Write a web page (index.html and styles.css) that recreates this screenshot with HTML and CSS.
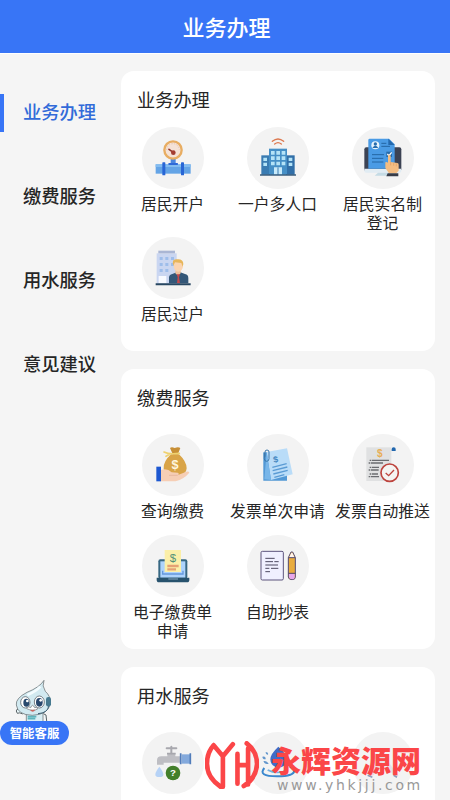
FILE: index.html
```html
<!DOCTYPE html>
<html lang="zh-CN">
  <head>
    <meta charset="UTF-8" />
    <meta name="viewport" content="width=device-width, initial-scale=1.0" />
    <title>业务办理</title>
    <link rel="stylesheet" href="styles.css">
  </head>
  <body class="body">
    <header class="header">
      <h1 class="header__title">业务办理</h1>
    </header>
    <div class="container">
      <ul class="menu">
        <li class="menu__item menu__item-active">业务办理</li>
        <li class="menu__item">缴费服务</li>
        <li class="menu__item">用水服务</li>
        <li class="menu__item">意见建议</li>
      </ul>
      <main class="content">
        <section class="card">
          <h2 class="card__title">业务办理</h2>
          <ul class="list list-business">
            <li class="service">
              <svg class="service__icon" viewBox="0 0 186 186">
                <rect x="86" y="94" width="15" height="22" fill="#4a86e0" />
                <rect x="41" y="112" width="105" height="28" fill="#64a4e6" />
                <rect x="41" y="112" width="105" height="8" fill="#83bcf0" />
                <rect x="79" y="108" width="29" height="6" rx="2" fill="#2f6ad8" />
                <rect x="61" y="106" width="9" height="39" rx="2" fill="#2865d5" />
                <rect x="117" y="106" width="9" height="39" rx="2" fill="#2865d5" />
                <circle cx="93" cy="69" r="26" fill="#f5e2d6" stroke="#e8ad62" stroke-width="7" />
                <path d="M74 69a19 19 0 0 1 38 0" fill="none" stroke="#e4c5b3" stroke-width="3" stroke-dasharray="4 4" />
                <path d="M81 67l14 10" stroke="#93352b" stroke-width="5" stroke-linecap="round" />
                <circle cx="94" cy="77" r="7" fill="#a43d31" />
              </svg>
              <span class="service__name">居民开户</span>
            </li>
            <li class="service">
              <svg class="service__icon" viewBox="0 0 186 186">
                <path d="M76 43q17-14 34 0M83 51q10-8 20 0" fill="none" stroke="#dd7950" stroke-width="4" stroke-linecap="round" />
                <rect x="43" y="85" width="26" height="58" fill="#397bb2" />
                <rect x="117" y="85" width="26" height="58" fill="#316fa8" />
                <rect x="66" y="65" width="54" height="78" fill="#458fc6" />
                <path d="M49 92h11v10H49zM49 107h11v10H49zM125 92h11v10h-11zM125 107h11v10h-11zM72 72h11v11H72zM88 72h11v11H88zM104 72h11v11h-11zM72 88h11v11H72zM88 88h11v11H88zM104 88h11v11h-11zM72 104h11v11H72zM88 104h11v11H88zM104 104h11v11h-11z" fill="#b4e3f7" />
                <path d="M81 121h24v22H81z" fill="#c8eafa" />
                <path d="M93 121v22" stroke="#397bb2" stroke-width="3" />
                <rect x="39" y="142" width="108" height="4" fill="#244d70" />
              </svg>
              <span class="service__name">一户多人口</span>
            </li>
            <li class="service">
              <svg class="service__icon" viewBox="0 0 186 186">
                <rect x="37" y="61" width="111" height="72" rx="6" fill="#3c4354" />
                <path d="M37 125h111v7q0 5-6 5H43q-6 0-6-5z" fill="#e1ecf3" />
                <path d="M78 137h34v9H68z" fill="#c5dbe5" />
                <path d="M53 35h58l17 17v73H49V39q0-4 4-4z" fill="#4a9be5" />
                <path d="M109 35l19 19h-19z" fill="#2469ae" />
                <circle cx="70" cy="55" r="12" fill="#e9f4fc" />
                <circle cx="70" cy="51" r="5" fill="#286dae" />
                <path d="M61 63q9-13 18 0z" fill="#286dae" />
                <path d="M88 49h15M88 58h26M60 83h36M60 94h34M60 105h34" stroke="#2466a3" stroke-width="3" />
                <rect x="103" y="74" width="17" height="16" fill="#286ba9" />
                <path d="M106 81l5 5 8-10" fill="none" stroke="#fff" stroke-width="4" />
                <path d="M108 88q0-5 4-5t4 5v17l20 3q4 1 4 5v18l-7 8h-22l-11-16v-17q3-3 8 1z" fill="#f4bd82" />
                <path d="M116 105v10M125 107v9M133 109v9" stroke="#d99d66" stroke-width="2" />
                <path d="M107 139h32v9h-36z" fill="#373c48" />
              </svg>
              <span class="service__name">居民实名制<br />登记</span>
            </li>
            <li class="service">
              <svg class="service__icon" viewBox="0 0 186 186">
                <rect x="44" y="49" width="60" height="91" fill="#cad6f1" />
                <rect x="49" y="41" width="50" height="8" fill="#aab6d4" />
                <path d="M53 60h9v9h-9zM70 60h9v9h-9zM87 60h9v9h-9zM53 78h9v9h-9zM70 78h9v9h-9zM87 78h9v9h-9zM53 96h9v9h-9zM70 96h9v9h-9z" fill="#9ebdea" />
                <path d="M50 117h23v22H50z" fill="#f8faff" />
                <path d="M81 139v-17q0-9 10-11l13-5h11l14 5q10 2 10 12v16z" fill="#345778" />
                <path d="M101 96h15v13l-8 7-8-7z" fill="#efc19c" />
                <ellipse cx="109" cy="86" rx="14" ry="18" fill="#fbd4b0" />
                <path d="M94 86q-6-20 10-19 20-2 20 14l-2 8-4-11-19-2z" fill="#e7b65b" />
                <path d="M104 112h10l-3 9 3 18h-9l2-18z" fill="#c4484b" />
                <path d="M41 139h105v6H41z" fill="#284762" />
              </svg>
              <span class="service__name">居民过户</span>
            </li>
          </ul>
        </section>
        <section class="card">
          <h2 class="card__title">缴费服务</h2>
          <ul class="list list-payment">
            <li class="service">
              <svg class="service__icon" viewBox="0 0 186 186">
                <path d="M84 42q5-4 14 0 11-4 17 0l-8 20H93z" fill="#c78f36" />
                <path d="M87 61q-24 22-22 43 1 21 35 21 34 0 34-22 0-20-23-42z" fill="#d9a447" />
                <path d="M66 54q15 8 46 4M86 59l-14 8" fill="none" stroke="#efd270" stroke-width="5" stroke-linecap="round" />
                <text x="99" y="104" class="money money-bag">$</text>
                <path d="M57 108q18-7 32 7l18 1q7 3-1 8l27-11q8-1 9 3-16 19-41 26H57z" fill="#f6ceb5" />
                <path d="M81 124l26 0" stroke="#e1ae95" stroke-width="2" />
                <rect x="43" y="98" width="14" height="44" fill="#1d58d1" />
              </svg>
              <span class="service__name">查询缴费</span>
            </li>
            <li class="service">
              <svg class="service__icon" viewBox="0 0 186 186">
                <path d="M49 55h17l54 65v20H49z" fill="#5298d5" />
                <path d="M59 54l61-11 17 78-65 17z" fill="#b9dcf8" />
                <path d="M59 54l13 84-20-2z" fill="#78b6e9" />
                <path d="M76 100l43-11M77 110l44-11M79 120l43-11M82 130l30-8" stroke="#5a9bd4" stroke-width="4" />
                <text x="86" y="85" class="money money-note" transform="rotate(-10 86 76)">$</text>
                <path d="M54 68V54q0-6 6-6t6 6v20q0 8-7 8t-7-8V57" fill="none" stroke="#3a75a8" stroke-width="3" />
              </svg>
              <span class="service__name">发票单次申请</span>
            </li>
            <li class="service">
              <svg class="service__icon" viewBox="0 0 186 186">
                <rect x="43" y="40" width="75" height="101" fill="#e0e1e2" />
                <text x="83" y="69" class="money money-invoice">$</text>
                <path d="M53 79h58M50 87h43M53 100h28M50 108h30M53 120h25M50 128h31" stroke="#6a6c70" stroke-width="4" stroke-dasharray="5 2 60" />
                <path d="M119 51v-6q0-5 6-5t6 5v6z" fill="#2167ae" />
                <circle cx="113" cy="116" r="26" fill="#f5f4f2" stroke="#bd443e" stroke-width="5" />
                <path d="M101 117l9 8 16-17" fill="none" stroke="#bd443e" stroke-width="4" />
              </svg>
              <span class="service__name">发票自动推送</span>
            </li>
            <li class="service">
              <svg class="service__icon" viewBox="0 0 186 186">
                <rect x="49" y="73" width="87" height="58" rx="6" fill="#366782" />
                <rect x="55" y="79" width="75" height="49" fill="#add3fc" />
                <path d="M62 107v10h61v-10" fill="none" stroke="#6498dc" stroke-width="4" />
                <rect x="68" y="45" width="49" height="66" fill="#fbefa8" />
                <text x="93" y="80" class="money money-bill">$</text>
                <path d="M76 93h34M76 103h26" stroke="#e5a174" stroke-width="7" />
                <path d="M44 128h98v6q0 8-7 8H51q-7 0-7-8z" fill="#28536e" />
                <path d="M79 132h29" stroke="#668ba6" stroke-width="4" />
              </svg>
              <span class="service__name">电子缴费单<br />申请</span>
            </li>
            <li class="service">
              <svg class="service__icon" viewBox="0 0 186 186">
                <rect x="42" y="49" width="67" height="86" rx="4" fill="#f0f0ff" stroke="#5d557d" stroke-width="3" />
                <path d="M55 70h28M55 80h23M82 80h13M55 90h38M55 100h12M72 100h22M55 110h14" stroke="#4d4961" stroke-width="3" />
                <path d="M124 68l8-17h5l8 17v58q0 8-10 8t-11-8z" fill="#e9ac3e" stroke="#514970" stroke-width="3" />
                <path d="M126 68l7-15h3l7 15z" fill="#fff4ed" />
                <path d="M126 116h17v10q0 7-8 7t-9-7z" fill="#e8a6ed" />
                <path d="M124 68h21M124 115h21" stroke="#514970" stroke-width="3" />
              </svg>
              <span class="service__name">自助抄表</span>
            </li>
          </ul>
        </section>
        <section class="card card-last">
          <h2 class="card__title">用水服务</h2>
          <ul class="list list-water">
            <li class="service">
              <svg class="service__icon" viewBox="0 0 186 186">
                <path d="M45 98V85q0-12 13-12h18V64h24v9h17v19H65v6z" fill="#bebec3" />
                <path d="M88 64V44M74 49h29" stroke="#a8a8ae" stroke-width="6" stroke-linecap="round" />
                <path d="M75 65h26" stroke="#a7a7ad" stroke-width="5" />
                <rect x="119" y="67" width="26" height="28" fill="#83a9dc" />
                <path d="M116 64v33M145 64v33" stroke="#517cba" stroke-width="5" />
                <path d="M52 104q-24 31 0 31t0-31z" fill="#b6d2f6" />
                <circle cx="93" cy="123" r="22" fill="#437f2b" />
                <text x="93" y="133" class="question">?</text>
              </svg>
            </li>
            <li class="service">
              <svg class="service__icon" viewBox="0 0 186 186">
                <path d="M94 44q-24 22-24 38a25 25 0 0 0 50 0q0-16-26-38z" fill="#416bc9" />
                <path d="M46 74q11-3 10 8-9 1-10-8zM56 60q9 0 7 8-7 0-7-8zM49 88q10-3 16 7-11 4-16-7z" fill="#6296cc" />
                <path d="M52 108q-21 25 38 25 51 0 52-17 0-9-14-11" fill="none" stroke="#3b88ce" stroke-width="6" />
                <path d="M62 114q28 15 61 0" fill="none" stroke="#74b1df" stroke-width="5" />
              </svg>
            </li>
            <li class="service">
              <svg class="service__icon" viewBox="0 0 186 186">
                <path d="M55 131l31-72 13 22-34 49z" fill="#ecd9df" />
                <path d="M93 67l47 65h-14L86 81z" fill="#e3e1e8" />
                <path d="M47 130l14 6M125 130l10 6" stroke="#8e9abb" stroke-width="5" />
              </svg>
            </li>
          </ul>
        </section>
      </main>
    </div>

    <div class="chat">
      <svg class="chat__mascot" viewBox="0 0 120 135">
        <path d="M23 105Q14 99 7 103q-6-8-1-12 6-2 9 5l15 5M85 104l8 4 2 18" fill="#e6f5f8" stroke="#5c6467" stroke-width="3" />
        <path d="M34 92h50v38H34z" fill="#d9eef4" stroke="#5c6467" stroke-width="2" />
        <path d="M87 4Q74 25 36 40 1 58 4 78q4 30 48 31 49-2 54-37Q107 51 91 37 80 21 87 4z" fill="#d2eaf1" stroke="#596164" stroke-width="2" />
        <path d="M76 23Q62 38 37 48" fill="none" stroke="#f4fcff" stroke-width="8" />
        <ellipse cx="31" cy="70" rx="14" ry="17" fill="#fff" stroke="#42474f" stroke-width="2" />
        <ellipse cx="73" cy="69" rx="15" ry="18" fill="#fff" stroke="#42474f" stroke-width="2" />
        <ellipse cx="34" cy="71" rx="9" ry="12" fill="#28486d" />
        <ellipse cx="73" cy="70" rx="10" ry="13" fill="#28486d" />
        <circle cx="37" cy="66" r="4" fill="#fff" />
        <circle cx="77" cy="64" r="4" fill="#fff" />
        <path d="M35 89q5-10 12-3 5-14 12 0 7-4 9 4-13 8-33-1z" fill="#fff" stroke="#686b70" stroke-width="2" />
        <path d="M45 93q9 11 16-1z" fill="#c96761" />
        <rect x="93" y="54" width="15" height="29" rx="7" fill="#46798f" />
        <path d="M101 82q-3 20-32 22" fill="none" stroke="#3c5f74" stroke-width="3" />
        <path d="M38 113h26M38 119h23" stroke="#5eb5bd" stroke-width="5" />
      </svg>
      <span class="chat__label">智能客服</span>
    </div>

    <div class="watermark">
      <svg class="watermark__logo" viewBox="0 0 163 143">
        <path d="M26 12Q6 34 6 68q0 42 41 69M26 12l28 33L84 9M54 43v94M98 38v90M98 72h32M126 6q31 24 31 63-2 42-40 66M130 22v108" fill="none" stroke="#fb4648" stroke-width="14" stroke-linecap="round" stroke-linejoin="round" />
      </svg>
      <div class="watermark__text">
        <span class="watermark__name">永辉资源网</span>
        <span class="watermark__site">www.yhkjjj.com</span>
      </div>
    </div>
  </body>
</html>
```

FILE: styles.css
```css
.body {
  position: relative;
  height: 800px;
  margin: 0;
  overflow: hidden;
  background-color: #f5f5f5;
  color: #262626;
  font-family: "Noto Sans CJK SC", sans-serif;
}
.header {
  display: flex;
  justify-content: center;
  height: 53px;
  background-color: #3875f6;
  border-bottom: 1px solid #fff;
}
.header__title {
  margin: 0;
  padding-left: 3px;
  color: #fff;
  font-size: 22px;
  font-weight: 500;
  line-height: 52px;
}
.container {
  display: flex;
  flex-direction: row;
}
.menu {
  width: 121px;
  margin: 0;
  padding: 17px 0 0;
  list-style: none;
}
.menu__item {
  height: 38px;
  margin: 23px 0 46px;
  padding-left: 23px;
  font-size: 18.3px;
  font-weight: 500;
  line-height: 35px;
}
.menu__item-active {
  padding-left: 19px;
  border-left: 4px solid #3875f6;
  color: #326bd9;
}
.content {
  display: flex;
  flex-direction: column;
  gap: 18px;
  width: 314px;
  padding-top: 17px;
}
.card {
  height: 280px;
  background-color: #fff;
  border-radius: 13px;
}
.card-last {
  height: 133px;
  border-radius: 13px 13px 0 0;
}
.card__title {
  margin: 0;
  padding: 15px 0 1px 16px;
  font-size: 18.2px;
  font-weight: 400;
  line-height: 27px;
}
.list {
  display: grid;
  grid-template-columns: repeat(3, 105px);
  margin: 0 0 0 -1px;
  padding: 0;
  list-style: none;
}
.list-business {
  grid-auto-rows: 110px;
  padding-top: 13px;
}
.list-payment {
  grid-auto-rows: 101px;
  padding-top: 22px;
}
.list-water {
  padding-top: 22px;
}
.service {
  display: flex;
  flex-direction: column;
  align-items: center;
  gap: 5px;
}
.service__icon {
  flex-shrink: 0;
  width: 62px;
  height: 62px;
  border-radius: 50%;
  background-color: #f3f3f3;
}
.service__name {
  font-size: 15.8px;
  line-height: 19px;
  text-align: center;
  white-space: nowrap;
}
.money {
  font-family: "Liberation Sans", sans-serif;
  font-size: 38px;
  font-weight: bold;
  text-anchor: middle;
  fill: #fff6df;
}
.money-note {
  font-size: 26px;
  fill: #4385bf;
}
.money-invoice {
  font-size: 30px;
  fill: #e8ae55;
}
.money-bill {
  font-size: 34px;
  font-weight: normal;
  fill: #518e78;
}
.question {
  font-family: "Liberation Sans", sans-serif;
  font-size: 29px;
  font-weight: bold;
  text-anchor: middle;
  fill: #fff;
}
.chat {
  position: absolute;
  left: 0;
  top: 679px;
  display: flex;
  flex-direction: column;
}
.chat__mascot {
  width: 40px;
  height: 45px;
  margin-left: 15px;
}
.chat__label {
  width: 69px;
  height: 24px;
  margin-top: -3px;
  z-index: 1;
  border-radius: 12px;
  background-color: #3875f6;
  color: #fff;
  font-size: 12.4px;
  font-weight: 700;
  line-height: 24px;
  text-align: center;
}
.watermark {
  position: absolute;
  left: 205px;
  top: 741px;
  display: flex;
  gap: 12px;
}
.watermark__logo {
  width: 54px;
  height: 48px;
}
.watermark__text {
  display: flex;
  flex-direction: column;
}
.watermark__name {
  color: #fb4648;
  font-size: 30px;
  font-weight: 900;
  line-height: 36px;
}
.watermark__site {
  padding-left: 6px;
  color: #999;
  font-family: "DejaVu Sans", sans-serif;
  font-size: 14px;
  letter-spacing: 2.65px;
  line-height: 16px;
}
```
